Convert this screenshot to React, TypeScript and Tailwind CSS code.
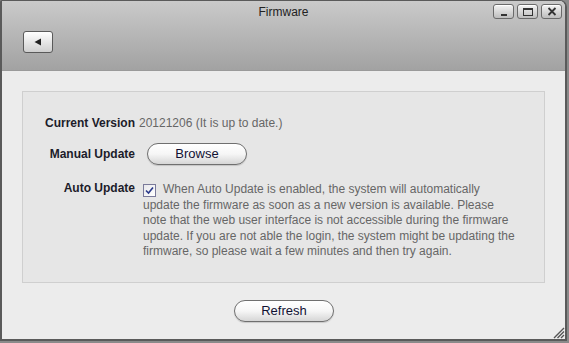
import React from 'react';

const font = { fontFamily: '"Liberation Sans", Arial, sans-serif' };

const WinButton: React.FC<{ children: React.ReactNode }> = ({ children }) => (
  <div className="w-[21px] h-[15px] flex items-center justify-center rounded-[3px] border border-[#6a6a6a] bg-gradient-to-b from-[#f4f4f4] to-[#bdbdbd] shadow-[inset_0_1px_0_#fff]">
    {children}
  </div>
);

const PillButton: React.FC<{ label: string; className?: string }> = ({ label, className }) => (
  <button
    className={
      'h-[22px] w-[100px] rounded-full border border-[#6f6f6f] bg-gradient-to-b from-[#ffffff] via-[#f6f6f6] to-[#d6d6d6] text-[13px] text-[#111133] shadow-[0_1px_1px_rgba(0,0,0,0.15)] ' +
      (className ?? '')
    }
  >
    {label}
  </button>
);

export default function App() {
  return (
    <div style={font} className="w-[569px] h-[343px] bg-[#8a8a8a] overflow-hidden">
      <div className="w-[567px] h-[341px] flex flex-col border-l-2 border-t border-r-2 border-b-2 border-[#5a5a5a] rounded-tr-[7px] rounded-tl-[2px] overflow-hidden bg-[#ececec]">
        {/* header */}
        <div className="relative h-[69px] shrink-0 bg-gradient-to-b from-[#cacaca] to-[#a2a2a2]">
          <div className="pt-[2px] text-center text-[12px] text-[#222]">Firmware</div>
          <div className="absolute right-[3px] top-[3px] flex gap-[3px]">
            <WinButton>
              <div className="w-[6px] h-[2px] bg-[#333] mt-[6px]" />
            </WinButton>
            <WinButton>
              <div className="w-[10px] h-[8px] border border-[#333] border-t-2" />
            </WinButton>
            <WinButton>
              <svg width="10" height="9" viewBox="0 0 10 9">
                <path d="M1.5 1 L8.5 8 M8.5 1 L1.5 8" stroke="#333" strokeWidth="1.8" />
              </svg>
            </WinButton>
          </div>
          <div className="ml-[21px] mt-[10px] w-[30px] h-[22px] flex items-center justify-center rounded-[3px] border border-[#5a5a5a] bg-gradient-to-b from-[#ffffff] to-[#cfcfcf]">
            <svg width="8" height="8" viewBox="0 0 8 8">
              <path d="M0.5 4 L7 0.5 L7 7.5 Z" fill="#222" />
            </svg>
          </div>
        </div>
        {/* body */}
        <div className="flex-1 relative border-t border-[#9a9a9a] px-[20px] pt-[20px]">
          <div className="h-[192px] bg-[#e6e6e6] border border-[#cfcfcf] pt-[22px] text-[12px]">
            <div className="grid grid-cols-[112px_1fr]">
              <div className="text-right font-bold text-[#1c1c2a] leading-[18px]">Current Version</div>
              <div className="pl-[4px] text-[#666] leading-[18px]">20121206 (It is up to date.)</div>

              <div className="text-right font-bold text-[#1c1c2a] mt-[13px] leading-[18px]">Manual Update</div>
              <div className="pl-[12px] mt-[11px]">
                <PillButton label="Browse" />
              </div>

              <div className="text-right font-bold text-[#1c1c2a] mt-[16px] leading-[15.6px]">Auto Update</div>
              <div className="pl-[8px] pr-[26px] mt-[17px] text-[#666] leading-[15.6px]">
                <span className="inline-flex align-[-2px] mr-[7px] w-[13px] h-[13px] items-center justify-center border border-[#7a7a9a] bg-gradient-to-br from-[#e8e8ec] to-[#ffffff]">
                  <svg width="9" height="9" viewBox="0 0 9 9">
                    <path d="M1 4.5 L3.5 7 L8 1.5" stroke="#2a3a8a" strokeWidth="1.6" fill="none" />
                  </svg>
                </span>
                When Auto Update is enabled, the system will automatically update the firmware as soon as a new version is available. Please note that the web user interface is not accessible during the firmware update. If you are not able the login, the system might be updating the firmware, so please wait a few minutes and then try again.
              </div>
            </div>
          </div>
          <div className="flex justify-center mt-[17px]">
            <PillButton label="Refresh" className="ml-[1px]" />
          </div>
          <svg className="absolute right-[0px] bottom-[0px]" width="13" height="13" viewBox="0 0 13 13">
            <path d="M12 2 L2 12 M12 5.5 L5.5 12 M12 9 L9 12" stroke="#555" strokeWidth="1.4" />
          </svg>
        </div>
      </div>
    </div>
  );
}
